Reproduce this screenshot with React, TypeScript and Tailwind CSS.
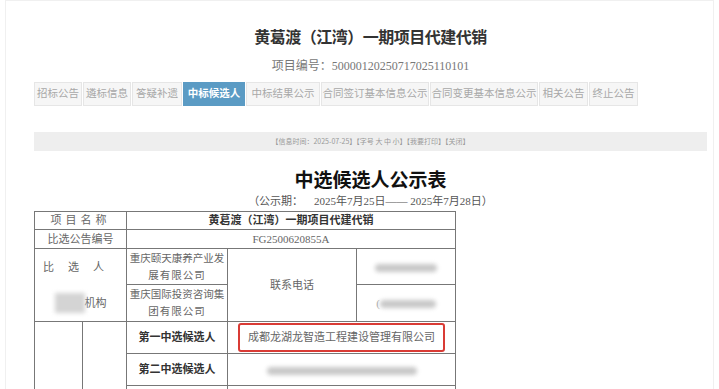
import React from 'react';

const tabs = [
  { label: '招标公告', w: 'w-[48px]' },
  { label: '遴标信息', w: 'w-[48px]' },
  { label: '答疑补遗', w: 'w-[50px]' },
  { label: '中标候选人', w: 'w-[62px]', active: true },
  { label: '中标结果公示', w: 'w-[74px]' },
  { label: '合同签订基本信息公示', w: 'w-[108px]' },
  { label: '合同变更基本信息公示', w: 'w-[108px]' },
  { label: '相关公告', w: 'w-[49px]' },
  { label: '终止公告', w: 'w-[49px]' },
];

const serif = "font-['Liberation_Serif','Noto_Sans_CJK_SC',serif]";
const cell = 'border border-[#777] text-center align-middle p-0';

const Blur = ({ w }: { w: string }) => (
  <span className={`inline-block h-[8px] ${w} rounded-sm bg-[#c8c8c8] blur-[2px] align-middle`} />
);

export default function App() {
  return (
    <div className={`min-h-[389px] bg-white ${serif} overflow-hidden`}>
      <div className="mx-[5px] border-x border-t border-[#f0f0f0] pt-[28px] pl-[28px] pr-[6px]">
        <h1 className="text-center text-[16px] leading-[18px] font-bold text-[#333] tracking-[-0.5px]">
          黄葛渡（江湾）一期项目代建代销
        </h1>
        <div className="mt-[12px] text-center text-[12px] leading-[14px] text-[#777]">
          项目编号：50000120250717025110101
        </div>
        <div className="mt-[9px] flex gap-[1px]">
          {tabs.map((t) => (
            <div
              key={t.label}
              className={`${t.w} h-[24px] flex items-center justify-center text-[10.5px] whitespace-nowrap border ${
                t.active
                  ? 'bg-[#5b9bc4] border-[#5b9bc4] text-white font-bold'
                  : 'bg-[#f6f6f6] border-[#e6e6e6] text-[#a8a8a8]'
              }`}
            >
              {t.label}
            </div>
          ))}
        </div>
        <div className="mt-[26px] h-[19px] bg-[#eeeeee] flex items-center justify-center text-[7px] text-[#999] font-['Noto_Sans_CJK_SC',sans-serif]">
          【信息时间：2025-07-25】【字号 大 中 小】【我要打印】【关闭】
        </div>
        <h2 className="mt-[17px] text-center text-[19px] leading-[22px] font-bold text-[#111] font-['Noto_Sans_CJK_SC',sans-serif]">
          中选候选人公示表
        </h2>
        <div className="mt-[4px] text-center text-[11px] leading-[14px] text-[#555]">
          （公示期：&nbsp;&nbsp;&nbsp;&nbsp;2025年7月25日—— 2025年7月28日）
        </div>
        <table className="mt-[3px] border-collapse w-[421px] text-[11px] text-[#666] table-fixed">
          <colgroup>
            <col className="w-[48px]" />
            <col className="w-[44px]" />
            <col className="w-[101px]" />
            <col className="w-[129px]" />
            <col className="w-[99px]" />
          </colgroup>
          <tbody>
            <tr className="h-[18px]">
              <td colSpan={2} className={`${cell} tracking-[4px]`}>项目名称</td>
              <td colSpan={3} className={`${cell} font-bold text-[#333]`}>黄葛渡（江湾）一期项目代建代销</td>
            </tr>
            <tr className="h-[19px]">
              <td colSpan={2} className={cell}>比选公告编号</td>
              <td colSpan={3} className={cell}>FG2500620855A</td>
            </tr>
            <tr className="h-[36px]">
              <td colSpan={2} className={`${cell} border-b-0 tracking-[14px]`}>比选人</td>
              <td className={`${cell} text-[10.5px] leading-[17px]`}>
                重庆颐天康养产业发
                <br />
                <span className="tracking-[1px]">展有限公司</span>
              </td>
              <td rowSpan={2} className={cell}>联系电话</td>
              <td className={cell}><Blur w="w-[62px]" /></td>
            </tr>
            <tr className="h-[37px]">
              <td colSpan={2} className={`${cell} border-t-0`}>
                <span className="inline-block h-[20px] w-[30px] bg-[#d4d4d4] blur-[2px] align-middle" />
                <span className="align-middle">机构</span>
              </td>
              <td className={`${cell} text-[10.5px] leading-[17px]`}>
                重庆国际投资咨询集
                <br />
                <span className="tracking-[1px]">团有限公司</span>
              </td>
              <td className={cell}><span className="text-[#aaa]">(</span><Blur w="w-[56px]" /></td>
            </tr>
            <tr className="h-[32px]">
              <td rowSpan={3} className={cell}></td>
              <td rowSpan={3} className={cell}></td>
              <td className={`${cell} font-bold text-[#333]`}>第一中选候选人</td>
              <td colSpan={2} className={cell}>
                <div className="mx-[10px] h-[29px] flex items-center justify-center border-2 border-[#d93b35] rounded-[3px]">
                  成都龙湖龙智造工程建设管理有限公司
                </div>
              </td>
            </tr>
            <tr className="h-[32px]">
              <td className={`${cell} font-bold text-[#333]`}>第二中选候选人</td>
              <td colSpan={2} className={cell}>
                <Blur w="w-[150px]" />
              </td>
            </tr>
            <tr className="h-[20px]">
              <td className={cell}></td>
              <td colSpan={2} className={cell}></td>
            </tr>
          </tbody>
        </table>
      </div>
    </div>
  );
}
